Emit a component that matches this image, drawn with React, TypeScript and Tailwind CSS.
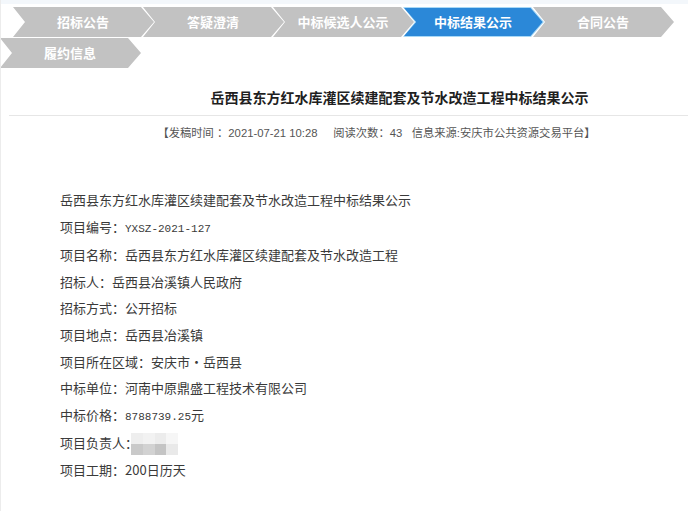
const tabsTop = [
  { label: '招标公告', active: false },
  { label: '答疑澄清', active: false },
  { label: '中标候选人公示', active: false },
  { label: '中标结果公示', active: true },
  { label: '合同公告', active: false },
]

function Tab({ label, active }: { label: string; active?: boolean }) {
  if (active) {
    return (
      <div className="relative w-[141px] h-[30px] shrink-0 bg-[#a8d8f6] [clip-path:polygon(0_0,128px_0,141px_15px,128px_30px,0_30px,12px_15px)]">
        <div className="absolute inset-0 bg-[#2b88d8] [clip-path:polygon(1px_1px,127.5px_1px,139.6px_15px,127.5px_29px,1px_29px,13.2px_15px)]" />
        <span className="relative flex h-full items-center justify-center pl-[12px] pr-[13px] text-[13px] font-bold text-white">
          {label}
        </span>
      </div>
    )
  }
  return (
    <div className="w-[141px] h-[30px] shrink-0 bg-[#c2c2c2] [clip-path:polygon(0_0,128px_0,141px_15px,128px_30px,0_30px,12px_15px)] flex items-center justify-center pl-[12px] pr-[13px] text-[13px] font-bold text-white">
      {label}
    </div>
  )
}

const rows: { k: string; v: string; mono?: boolean }[] = [
  { k: '项目编号：', v: 'YXSZ-2021-127', mono: true },
  { k: '项目名称：', v: '岳西县东方红水库灌区续建配套及节水改造工程' },
  { k: '招标人：', v: '岳西县冶溪镇人民政府' },
  { k: '招标方式：', v: '公开招标' },
  { k: '项目地点：', v: '岳西县冶溪镇' },
  { k: '项目所在区域：', v: '安庆市・岳西县' },
  { k: '中标单位：', v: '河南中原鼎盛工程技术有限公司' },
]

export default function App() {
  return (
    <div className="w-[688px] h-[511px] overflow-hidden bg-white border-l border-[#ececec] font-['Noto_Sans_CJK_SC',sans-serif]">
      <div className="h-[4px] bg-[#f3f7fb]" />
      <div className="pt-[3px]">
        <div className="flex pl-[12px]">
          {tabsTop.map((t, i) => (
            <div key={t.label} className={i === 0 ? '' : '-ml-[11px]'}>
              <Tab label={t.label} active={t.active} />
            </div>
          ))}
        </div>
        <div className="flex mt-[1px] -ml-[1px]">
          <Tab label="履约信息" />
        </div>
      </div>

      <h1 className="mt-[19px] pl-[110px] text-center text-[14px] leading-[20px] font-bold text-[#1f1f1f]">
        岳西县东方红水库灌区续建配套及节水改造工程中标结果公示
      </h1>
      <div className="mt-[8px] ml-[8px] border-t border-[#e6e6e6]" />
      <p className="mt-[7px] pl-[64px] text-center text-[11.3px] leading-[20px] text-[#555] font-['Liberation_Sans','Noto_Sans_CJK_SC',sans-serif]">
        【发稿时间 ：2021-07-21 10:28&nbsp;&nbsp;&nbsp;&nbsp; 阅读次数：43&nbsp;&nbsp; 信息来源:安庆市公共资源交易平台】
      </p>

      <div className="mt-[44px] pl-[59px] text-[13px] leading-[26.6px] text-[#3a3a3a]">
        <p>岳西县东方红水库灌区续建配套及节水改造工程中标结果公示</p>
        {rows.map((r) => (
          <p key={r.k}>
            {r.k}
            {r.mono ? (
              <span className="font-['Liberation_Mono',monospace] text-[11px]">{r.v}</span>
            ) : (
              r.v
            )}
          </p>
        ))}
        <p>
          中标价格：<span className="font-['Liberation_Mono',monospace] text-[11px]">8788739.25</span>元
        </p>
        <p className="flex items-center h-[26.6px]">
          项目负责人：
          <span className="-ml-[7px] grid grid-cols-4 w-[47px] h-[22px]">
            <span className="bg-[#eeeeee]" />
            <span className="bg-[#f2f2f2]" />
            <span className="bg-[#ececec]" />
            <span className="bg-[#f6f6f6]" />
            <span className="bg-[#c9c9c9]" />
            <span className="bg-[#d2d2d2]" />
            <span className="bg-[#c4c4c4]" />
            <span className="bg-[#e9e9e9]" />
          </span>
        </p>
        <p>项目工期：200日历天</p>
      </div>
    </div>
  )
}
